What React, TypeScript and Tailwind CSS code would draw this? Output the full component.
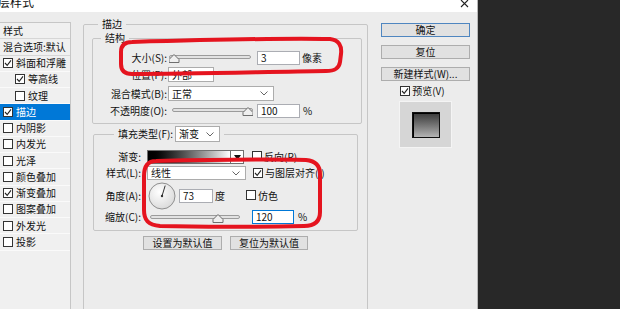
import React from "react";

const font = "font-['Noto_Sans_CJK_SC',sans-serif]";

const Check = ({ on = false }: { on?: boolean }) => (
  <span className="inline-flex h-[10px] w-[10px] shrink-0 items-center justify-center border border-[#333] bg-white">
    {on && (
      <svg width="8" height="8" viewBox="0 0 8 8">
        <path d="M1 4 L3.2 6.3 L7 1.3" fill="none" stroke="#222" strokeWidth="1.1" />
      </svg>
    )}
  </span>
);

const Slider = ({ w, pos, className = "" }: { w: number; pos: number; className?: string }) => (
  <svg width={w} height={15} className={`shrink-0 ${className}`}>
    <rect x={0.5} y={5.5} width={w - 1} height={3} rx={1.5} fill="#e2e2e2" stroke="#9b9b9b" />
    <path
      d={`M${pos - 5} 12.5 L${pos - 5} 9.5 L${pos} 4.5 L${pos + 5} 9.5 L${pos + 5} 12.5 Z`}
      fill="#efefef"
      stroke="#6e6e6e"
    />
  </svg>
);

const Chevron = () => (
  <svg width="8" height="5" className="shrink-0">
    <path d="M0.5 0.5 L4 4 L7.5 0.5" fill="none" stroke="#666" />
  </svg>
);

const Select = ({ text, className, chevron = true }: { text: string; className: string; chevron?: boolean }) => (
  <div className={`flex shrink-0 items-center justify-between border border-[#acacac] bg-white pl-[3px] pr-[5px] ${className}`}>
    <span>{text}</span>
    {chevron && <Chevron />}
  </div>
);

const Input = ({ text, className }: { text: string; className: string }) => (
  <div className={`flex h-[14px] shrink-0 items-center border bg-white pl-[3px] ${className}`}>{text}</div>
);

const Btn = ({ text, className }: { text: string; className: string }) => (
  <div className={`flex h-[14px] items-center justify-center border bg-[#e1e1e1] ${className}`}>{text}</div>
);

const items = [
  { t: "斜面和浮雕", on: true },
  { t: "等高线", on: true, sub: true },
  { t: "纹理", sub: true },
  { t: "描边", on: true, sel: true },
  { t: "内阴影" },
  { t: "内发光" },
  { t: "光泽" },
  { t: "颜色叠加" },
  { t: "渐变叠加", on: true },
  { t: "图案叠加" },
  { t: "外发光" },
  { t: "投影" },
];

export default function App() {
  return (
    <div className={`relative flex h-[309px] w-[620px] overflow-hidden bg-[#282828] text-[10px] leading-[14px] text-[#111] ${font}`}>
      <div className="flex h-full w-[478px] shrink-0 flex-col border-r border-[#b8b8b8] bg-[#ececec]">
        {/* title bar */}
        <div className="flex h-[12px] shrink-0 items-start justify-between overflow-hidden bg-white">
          <span className="-ml-[2px] -mt-[5px] text-[12px] leading-[14px]">层样式</span>
          <svg width="9" height="8" className="mr-[8px]">
            <path d="M1 0 L8 7 M8 0 L1 7" stroke="#222" strokeWidth="1.1" />
          </svg>
        </div>

        <div className="flex min-h-0 flex-1 overflow-hidden">
          {/* style list */}
          <div className="mt-[10px] w-[71px] shrink-0 border-t border-r border-[#c6c6c6] bg-[#f0f0f0]">
            <div className="flex h-[16.25px] items-center border-b border-[#d6d6d6] pl-[3px]">样式</div>
            <div className="flex h-[16.25px] items-center border-b border-[#d6d6d6] pl-[3px]">混合选项:默认</div>
            {items.map((it) => (
              <div
                key={it.t}
                className={`flex h-[16.25px] items-center gap-[3px] border-b border-[#fafafa] ${it.sub ? "pl-[15px]" : "pl-[3px]"} ${it.sel ? "bg-[#0078d7] text-white" : ""}`}
              >
                <Check on={it.on} />
                <span>{it.t}</span>
              </div>
            ))}
          </div>

          {/* stroke group */}
          <fieldset className="ml-[12px] mt-[5px] h-[300px] w-[285px] shrink-0 rounded-[2px] border border-[#c6c6c6]">
            <legend className="ml-[14px] px-[4px] leading-[14px]">描边</legend>

            <fieldset className="ml-[8px] mr-[5px] rounded-[2px] border border-[#c6c6c6] pb-[5px]">
              <legend className="ml-[8px] px-[4px] leading-[14px]">结构</legend>
              <div className="mt-[5px] flex h-[15px] items-center">
                <span className="w-[74px] shrink-0 text-right">大小(S):</span>
                <Slider w={82} pos={5} className="ml-[2px]" />
                <Input text="3" className="ml-[6px] w-[43px] border-[#abadb3]" />
                <span className="ml-[2px]">像素</span>
              </div>
              <div className="mt-[2px] flex h-[15px] items-center">
                <span className="w-[74px] shrink-0 text-right">位置(P):</span>
                <Select text="外部" className="ml-[1px] h-[15px] w-[46px]" chevron={false} />
              </div>
              <div className="mt-[4px] flex h-[15px] items-center">
                <span className="w-[74px] shrink-0 text-right">混合模式(B):</span>
                <Select text="正常" className="ml-[1px] h-[15px] w-[106px]" />
              </div>
              <div className="mt-[2px] flex h-[15px] items-center">
                <span className="w-[74px] shrink-0 text-right">不透明度(O):</span>
                <Slider w={81} pos={76} className="ml-[5px]" />
                <Input text="100" className="ml-[4px] w-[43px] border-[#abadb3]" />
                <span className="ml-[3px]">%</span>
              </div>
            </fieldset>

            <fieldset className="ml-[9px] mr-[9px] mt-[2px] rounded-[2px] border border-[#c6c6c6] pb-[6px]">
              <legend className="ml-[20px] px-[4px]">
                <div className="flex items-center">
                  <span className="whitespace-nowrap">填充类型(F):</span>
                  <Select text="渐变" className="ml-[2px] h-[16px] w-[45px]" />
                </div>
              </legend>
              <div className="mt-[8px] flex h-[14px] items-center">
                <span className="w-[47px] shrink-0 text-right">渐变:</span>
                <div className="ml-[6px] h-[14px] w-[84px] shrink-0 border border-[#6f6f6f] bg-linear-to-r from-black to-white" />
                <div className="flex h-[14px] w-[13px] shrink-0 items-center justify-center border border-l-0 border-[#6f6f6f] bg-white">
                  <svg width="7" height="5">
                    <path d="M0 0 L7 0 L3.5 5 Z" fill="#111" />
                  </svg>
                </div>
                <span className="ml-[8px]"><Check /></span>
                <span className="ml-[2px]">反向(R)</span>
              </div>
              <div className="mt-[2px] flex h-[14px] items-center">
                <span className="w-[47px] shrink-0 text-right">样式(L):</span>
                <Select text="线性" className="ml-[6px] h-[14px] w-[99px]" />
                <span className="ml-[7px]"><Check on /></span>
                <span className="ml-[2px]">与图层对齐(I)</span>
              </div>
              <div className="mt-[2px] flex h-[28px] items-center">
                <span className="w-[47px] shrink-0 text-right">角度(A):</span>
                <svg width="28" height="28" className="ml-[7px] shrink-0">
                  <defs>
                    <radialGradient id="dial" cx="40%" cy="35%" r="70%">
                      <stop offset="0" stopColor="#ffffff" />
                      <stop offset="1" stopColor="#d9d9d9" />
                    </radialGradient>
                  </defs>
                  <circle cx="14" cy="14" r="13" fill="url(#dial)" stroke="#8f8f8f" />
                  <line x1="14" y1="14" x2="17.2" y2="3.6" stroke="#333" />
                  <circle cx="14" cy="14" r="1.2" fill="#333" />
                </svg>
                <Input text="73" className="ml-[3px] w-[34px] border-[#abadb3]" />
                <span className="ml-[2px]">度</span>
                <span className="ml-[21px]"><Check /></span>
                <span className="ml-[2px]">仿色</span>
              </div>
              <div className="flex h-[14px] items-center">
                <span className="w-[47px] shrink-0 text-right">缩放(C):</span>
                <Slider w={90} pos={68} className="ml-[9px]" />
                <Input text="120" className="ml-[12px] w-[42px] border-[#0078d7]" />
                <span className="ml-[4px]">%</span>
              </div>
            </fieldset>

            <div className="ml-[9px] mr-[9px] mt-[5px] flex justify-center gap-[8px]">
              <Btn text="设置为默认值" className="w-[79px] border-[#adadad]" />
              <Btn text="复位为默认值" className="w-[78px] border-[#adadad]" />
            </div>
          </fieldset>

          {/* right column */}
          <div className="ml-[13px] mt-[11px] flex w-[89px] shrink-0 flex-col">
            <Btn text="确定" className="border-[#4f86c0]" />
            <Btn text="复位" className="mt-[8px] border-[#adadad]" />
            <Btn text="新建样式(W)..." className="mt-[8px] border-[#adadad]" />
            <div className="mt-[4px] flex h-[12px] items-center justify-center gap-[2px] pr-[6px]">
              <Check on />
              <span>预览(V)</span>
            </div>
            <div className="mx-auto mt-[4px] flex h-[47px] w-[53px] items-center justify-center border border-[#f4f4f4] bg-[#d6d6d6]">
              <div className="h-[26px] w-[28px] border border-[#111] bg-linear-to-b from-[#3a3a3a] to-[#b4b4b4] shadow-[inset_1px_1px_0_#000]" />
            </div>
          </div>
        </div>
      </div>

      {/* red hand-drawn marks */}
      <svg width="620" height="309" className="pointer-events-none absolute left-0 top-0">
        <path
          d="M132 42 C200 40 280 38 330 39 C339 40 342 46 341 54 L340 62 C339 69 334 71 326 71 C260 72 190 74 132 74 C124 74 121 70 121 64 L121 52 C121 45 125 42 132 42 Z"
          fill="none"
          stroke="#e5141f"
          strokeWidth="4"
          strokeLinejoin="round"
        />
        <path
          d="M156 161 C200 160 260 159 306 160 C316 161 320 166 320 174 L320 212 C320 222 314 226 304 226 C250 227 200 227 160 226 C148 225 144 220 144 210 L144 176 C144 166 148 161 156 161 Z"
          fill="none"
          stroke="#e5141f"
          strokeWidth="4"
          strokeLinejoin="round"
        />
      </svg>
    </div>
  );
}
